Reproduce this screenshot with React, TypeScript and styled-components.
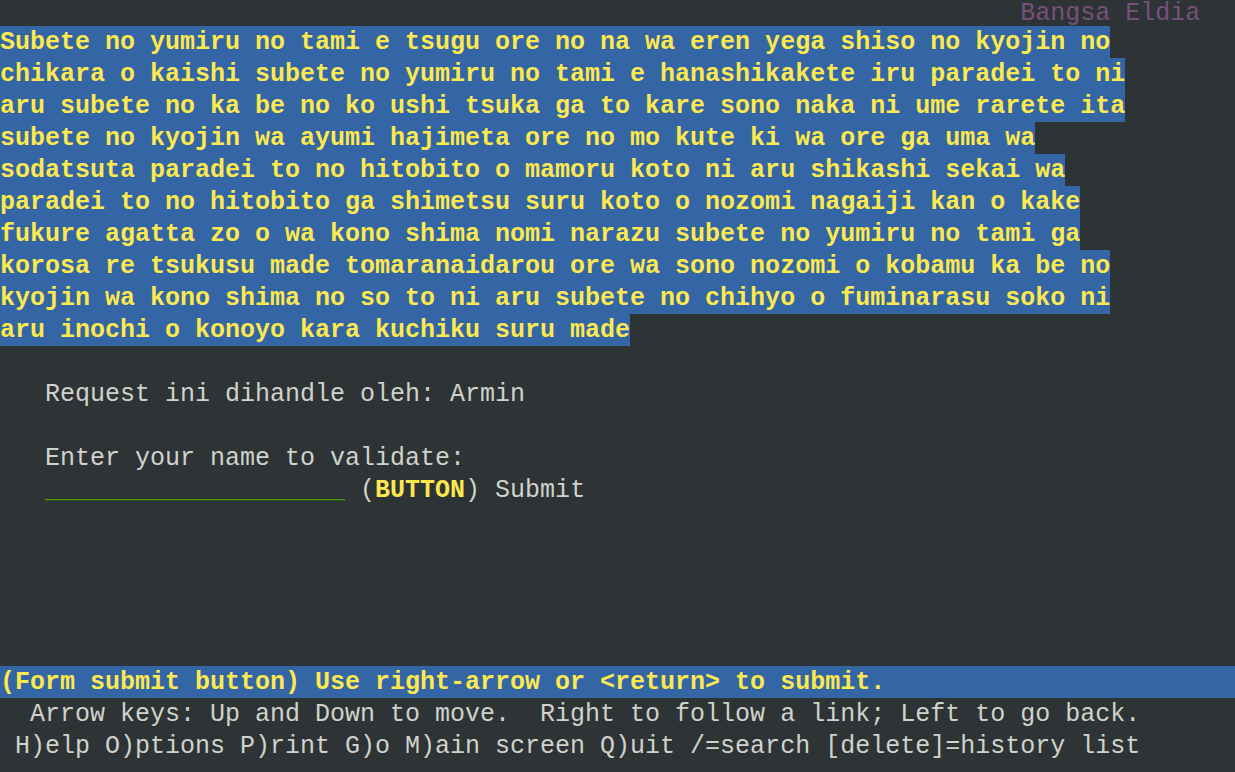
import React from "react";
import styled, { createGlobalStyle } from "styled-components";

const Global = createGlobalStyle`
  html, body { margin: 0; padding: 0; background: #2e3436; }
  body { overflow: hidden; }
`;

const Screen = styled.div`
  width: 1235px;
  height: 772px;
  background: #2e3436;
  color: #d0d2cc;
  font-family: "Courier New", "Nimbus Mono PS", "Nimbus Mono L", FreeMono, "Liberation Mono", monospace;
  font-size: 25px;
  display: flex;
  flex-direction: column;
  overflow: hidden;
`;

const Line = styled.div`
  flex: none;
  height: 32px;
  line-height: 34px;
  white-space: pre;
`;

const TopLine = styled(Line)`
  height: 26px;
  line-height: 27px;
`;

const Bar = styled(Line)`
  background: #3465a4;
  color: #fce94f;
  font-weight: bold;
`;

const Title = styled.span`
  color: #75507b;
`;

const Marked = styled.span`
  display: inline-block;
  height: 32px;
  background: #3465a4;
  color: #fce94f;
  font-weight: bold;
`;

const Field = styled.span`
  color: #4e9a06;
`;

const Strong = styled.span`
  color: #fce94f;
  font-weight: bold;
`;

const paragraph = [
  "Subete no yumiru no tami e tsugu ore no na wa eren yega shiso no kyojin no",
  "chikara o kaishi subete no yumiru no tami e hanashikakete iru paradei to ni",
  "aru subete no ka be no ko ushi tsuka ga to kare sono naka ni ume rarete ita",
  "subete no kyojin wa ayumi hajimeta ore no mo kute ki wa ore ga uma wa",
  "sodatsuta paradei to no hitobito o mamoru koto ni aru shikashi sekai wa",
  "paradei to no hitobito ga shimetsu suru koto o nozomi nagaiji kan o kake",
  "fukure agatta zo o wa kono shima nomi narazu subete no yumiru no tami ga",
  "korosa re tsukusu made tomaranaidarou ore wa sono nozomi o kobamu ka be no",
  "kyojin wa kono shima no so to ni aru subete no chihyo o fuminarasu soko ni",
  "aru inochi o konoyo kara kuchiku suru made",
];

export default function App() {
  return (
    <>
      <Global />
      <Screen>
        <TopLine>
          {" ".repeat(68)}
          <Title>Bangsa Eldia</Title>
        </TopLine>
        {paragraph.map((t, i) => (
          <Line key={i}>
            <Marked>{t}</Marked>
          </Line>
        ))}
        <Line />
        <Line>{"   Request ini dihandle oleh: Armin"}</Line>
        <Line />
        <Line>{"   Enter your name to validate:"}</Line>
        <Line>
          {"   "}
          <Field>{"_".repeat(20)}</Field>
          {" ("}
          <Strong>BUTTON</Strong>
          {") Submit"}
        </Line>
        <Line />
        <Line />
        <Line />
        <Line />
        <Line />
        <Bar>{"(Form submit button) Use right-arrow or <return> to submit."}</Bar>
        <Line>{"  Arrow keys: Up and Down to move.  Right to follow a link; Left to go back."}</Line>
        <Line>{" H)elp O)ptions P)rint G)o M)ain screen Q)uit /=search [delete]=history list"}</Line>
      </Screen>
    </>
  );
}
